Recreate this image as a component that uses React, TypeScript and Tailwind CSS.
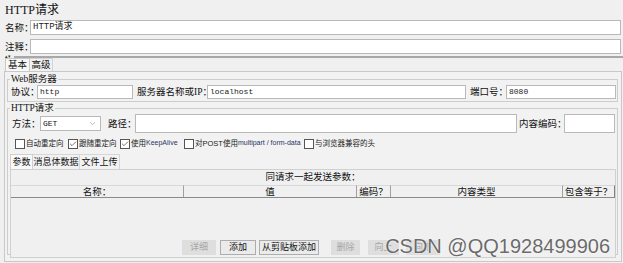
import { Check, ChevronDown } from "lucide-react";

const serif = "font-['Liberation_Serif','Noto_Sans_CJK_SC',serif]";
const mono = "font-['Liberation_Mono','Noto_Sans_CJK_SC',monospace]";
const small = "font-['Liberation_Sans','Noto_Sans_CJK_SC',sans-serif]";

const columns = [
  { label: "名称：", width: "w-[172px]" },
  { label: "值", width: "w-[173px]" },
  { label: "编码？", width: "w-[34px]" },
  { label: "内容类型", width: "w-[172px]" },
  { label: "包含等于？", width: "flex-1" },
];

const options = [
  { label: "自动重定向", checked: false, width: "w-[53px]" },
  { label: "跟随重定向", checked: true, width: "w-[52px]" },
  { label: "使用 ", latin: "KeepAlive", checked: true, width: "w-[64px]" },
  { label: "对POST使用", latin: "multipart / form-data", checked: false, width: "w-[120px]" },
  { label: "与浏览器兼容的头", checked: false, width: "w-[70px]" },
];

const buttons = [
  { label: "详细", disabled: true, className: "w-[34px]" },
  { label: "添加", disabled: false, className: "ml-[4px] w-[36px]" },
  { label: "从剪贴板添加", disabled: false, className: "ml-[3px] w-[60px]" },
  { label: "删除", disabled: true, className: "ml-[12px] w-[29px]" },
  { label: "向上", disabled: true, className: "ml-[8px] w-[31px]" },
  { label: "向下", disabled: true, className: "ml-[7px] w-[34px]" },
];

function Field({ value, className }: { value?: string; className: string }) {
  return (
    <div className={`bg-white border border-[#b9b9b9] flex items-center pl-[2px] ${mono} text-[8px] text-[#222] ${className}`}>
      {value}
    </div>
  );
}

function Label({ text, className }: { text: string; className: string }) {
  return <span className={`shrink-0 text-[9.5px] leading-[12px] ${className}`}>{text}</span>;
}

export default function App() {
  return (
    <div className={`relative w-[623px] h-[263px] overflow-hidden whitespace-nowrap bg-[#f0f0f0] text-[#111] ${serif}`}>
      <div className="h-[20px] pl-[5px] pt-[3px] text-[12px] leading-[14px]">HTTP请求</div>

      <div className="flex items-center h-[15px]">
        <Label text="名称：" className="w-[30px] pl-[5px]" />
        <Field value="HTTP请求" className="flex-1 mr-[2px] h-[15px] text-[9px]" />
      </div>
      <div className="flex items-center h-[15px] mt-[4px]">
        <Label text="注释：" className="w-[30px] pl-[5px]" />
        <Field className="flex-1 mr-[2px] h-[15px]" />
      </div>

      {/* splitter */}
      <div className="flex items-center h-[3px] mt-[1px]">
        <div className="w-[14px] pl-[5px] text-[5px] leading-[3px] text-[#333]">▴▾</div>
        <div className="flex-1 h-[2px] bg-[#a8a8a8]" />
      </div>

      {/* tabs */}
      <div className="flex h-[13px] pl-[5px] text-[9.5px] leading-[12px]">
        <div className="w-[25px] text-center bg-[#f8f8f8] border border-b-0 border-[#c8c8c8]">基本</div>
        <div className="w-[23px] text-center border-t border-r border-[#d4d4d4]">高级</div>
      </div>

      <div className="ml-[4px] w-[618px] h-[191px] border border-[#c8c8c8] bg-[#f2f2f2]">
        <fieldset className="mt-[1px] ml-[2px] mr-[3px] border border-[#cdcdcd] pb-[2px]">
          <legend className="ml-[2px] px-[1px] text-[9.5px] leading-[12px]">Web服务器</legend>
          <div className="flex items-center h-[14px]">
            <Label text="协议：" className="w-[29px] pl-[3px]" />
            <Field value="http" className="w-[96px] h-[14px]" />
            <Label text="服务器名称或IP：" className="ml-[4px] w-[70px]" />
            <Field value="localhost" className="flex-1 h-[14px]" />
            <Label text="端口号：" className="ml-[4px] w-[36px]" />
            <Field value="8080" className="w-[110px] h-[14px] mr-[1px]" />
          </div>
        </fieldset>

        <fieldset className="ml-[2px] mr-[3px] border border-[#cdcdcd] h-[153px]">
          <legend className="ml-[2px] px-[1px] text-[9.5px] leading-[12px]">HTTP请求</legend>
          <div className="flex items-center h-[19px] pl-[4px] pr-[2px]">
            <Label text="方法：" className="w-[28px]" />
            <div className={`shrink-0 w-[61px] h-[15px] bg-white border border-[#b9b9b9] flex items-center justify-between pl-[2px] pr-[3px] ${mono} text-[8px]`}>
              GET
              <ChevronDown className="w-[9px] h-[9px] text-[#888]" strokeWidth={1.5} />
            </div>
            <Label text="路径：" className="ml-[7px] w-[27px]" />
            <Field className="flex-1 h-[19px]" />
            <Label text="内容编码：" className="ml-[2px] w-[45px]" />
            <Field className="shrink-0 w-[51px] h-[19px]" />
          </div>

          <div className={`flex items-center h-[13px] mt-[4px] pl-[7px] ${small} text-[7.5px] text-[#222]`}>
            {options.map((o) => (
              <div key={o.label} className={`flex items-center ${o.width}`}>
                <div className="shrink-0 w-[10px] h-[10px] mr-[1px] bg-white border border-[#555] flex items-center justify-center">
                  {o.checked && <Check className="w-[8px] h-[8px] text-[#333]" strokeWidth={2} />}
                </div>
                <span>{o.label}</span>
                {o.latin && <span className="text-[7px] text-[#2a3566]">{o.latin}</span>}
              </div>
            ))}
          </div>

          {/* sub tabs */}
          <div className="flex h-[15px] mt-[4px] pl-[2px] text-[9px] leading-[14px]">
            <div className="w-[23px] text-center bg-[#fafafa] border border-b-0 border-[#d0d0d0]">参数</div>
            <div className="w-[47px] text-center border-t border-r border-[#d6d6d6]">消息体数据</div>
            <div className="w-[40px] text-center border-t border-r border-[#d6d6d6]">文件上传</div>
          </div>

          <div className="ml-[2px] mr-[1px] h-[89px] border border-[#d0d0d0] bg-[#f0f0f0]">
            <div className="h-[15px] text-center text-[9.5px] leading-[15px]">同请求一起发送参数：</div>
            <div className="flex h-[13px] border-b border-[#8a8a8a] text-[9.5px] leading-[12px]">
              {columns.map((c, i) => (
                <div
                  key={c.label}
                  className={`${c.width} text-center border-t border-[#d8d8d8] ${i > 0 ? "border-l border-l-[#a0a0a0]" : ""} ${i === columns.length - 1 ? "border-r border-r-[#808080]" : ""}`}
                >
                  {c.label}
                </div>
              ))}
            </div>
            <div className="h-[42px]" />
            <div className="flex justify-center h-[15px] pr-[4px] text-[9px]">
              {buttons.map((b) => (
                <div
                  key={b.label}
                  className={`${b.className} h-[15px] flex items-center justify-center border ${
                    b.disabled ? "bg-[#dedede] border-[#dedede] text-[#a6a6a6]" : "bg-[#ebebeb] border-[#adadad] text-[#111]"
                  }`}
                >
                  {b.label}
                </div>
              ))}
            </div>
          </div>
        </fieldset>
      </div>

      <div className="absolute right-[13px] bottom-[7px] font-['Liberation_Sans',sans-serif] text-[20px] leading-[20px] text-[#6b6b6b] [text-shadow:0_0_2px_#fff,0_0_1px_#fff]">
        CSDN @QQ1928499906
      </div>
    </div>
  );
}
